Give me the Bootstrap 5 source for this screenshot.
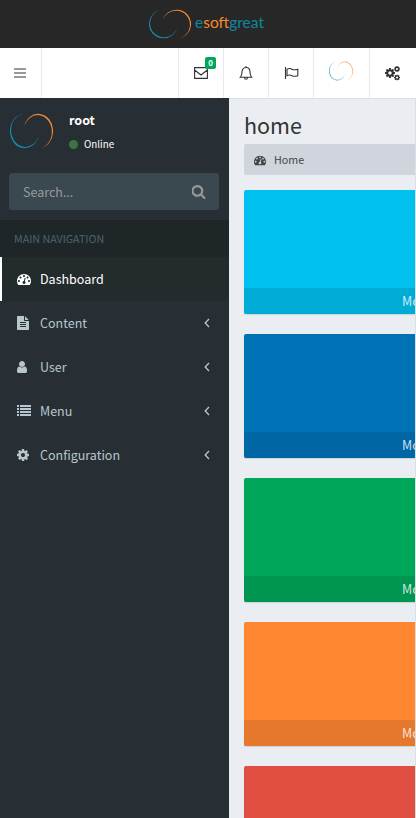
<!DOCTYPE html>
<html lang="en">
<head>
<meta charset="utf-8">
<meta name="viewport" content="width=device-width, initial-scale=1">
<title>home</title>
<link href="https://cdn.jsdelivr.net/npm/bootstrap@5.3.0/dist/css/bootstrap.min.css" rel="stylesheet">
<style>
body{font-family:"Source Sans Pro","Noto Sans CJK SC",sans-serif;font-size:12.5px;line-height:20px;width:416px;height:818px;overflow:hidden;background:#eaedf2;color:#333}
svg{display:block;flex:none}
a{text-decoration:none;color:inherit}
.brandbar{height:48px;background:#272727;padding:9px 0 0 149px}
.brandname{font-family:Lato,sans-serif;font-weight:400;font-size:16px}
.topbar{height:50px;background:#fff}
.topbar>a{border-left:1px solid #e9e9e9;height:50px}
.topbar>.toggle{width:42px;border-left:0;border-right:1px solid #e9e9e9;padding:20px 0 0 14px}
.cell{width:45px}.cell-user{width:56px;padding:13px 0 0 15px}.cell-gear{width:47px}
.count{top:9px;left:26px;width:11px;height:12px;border-radius:2px;background:#00a65a;color:#fff;font:bold 8px/12px "Noto Sans CJK SC",sans-serif;text-align:center}
.shell{height:720px}
.side{width:229px;background:#272f34;color:#b8c7ce}
.profile{height:75px;padding:15px 0 0 10px;color:#fff}
.profile b{font-weight:600;font-size:12.5px;line-height:13px;margin-bottom:10px}
.online{font-size:9.8px;line-height:16px}
.dot{width:9px;height:9px;border-radius:50%;background:#3c763d;margin-right:6px}
.find{margin:0 10px 10px 9px;height:37px;border-radius:3px;background:#3a4950;color:#999;padding:0 13px 0 14px}
.heading{height:37px;line-height:38px;padding-left:14px;font-size:10.7px;background:#1e2628;color:#4b646f}
.entry{height:44px;padding:0 19px 0 13px;border-left:3px solid transparent}
.entry.current{color:#fff;background:#232b2d;border-color:#fff;border-left-width:2px;padding-left:14px}
.ico{width:24px}
.page{border-right:1px solid #dcdfe3;border-top:1px solid #dadde1;padding:13px 0 0 15px;overflow:hidden}
.page h1{font-size:21.5px;line-height:26px;font-weight:400;margin:0 0 6px}
.crumb{height:31px;border-radius:2px 0 0 2px;background:#d0d4dc;color:#444;font-size:10.7px;padding-left:10px;margin-bottom:15px}
.tile{width:391px;height:124px;border-radius:2px;margin-bottom:20px;box-shadow:0 1px 1px rgba(0,0,0,.12)}
.tile a{height:26px;line-height:26px;background:rgba(0,0,0,.1);color:rgba(255,255,255,.8);padding-left:158px}
.aqua{background:#00c0ef}.blue{background:#0073b7}.green{background:#00a65a}.orange{background:#ff8631}.red{background:#e04e41}
</style>
</head>
<body>
<svg width="0" height="0" class="position-absolute">
<symbol id="swirl" viewBox="0 0 42 30" preserveAspectRatio="none"><path fill="#1689ab" d="M13 .6A14.400 14.400 0 1 0 28.400 18A13.900 13.900 0 1 1 13 .6z"/><path fill="#f58a34" transform="rotate(180 21 15)" d="M13 .6A14.400 14.400 0 1 0 28.400 18A13.900 13.900 0 1 1 13 .6z"/></symbol>
<symbol id="dash" viewBox="0 0 1792 1792"><path d="M384 1152q0-53-37.500-90.500t-90.500-37.500-90.500 37.500-37.500 90.500 37.500 90.500 90.500 37.500 90.500-37.500 37.500-90.500zm192-448q0-53-37.500-90.500t-90.500-37.500-90.500 37.500-37.500 90.500 37.500 90.500 90.500 37.500 90.500-37.500 37.500-90.500zm428 481l101-382q6-26-7.500-48.500t-38.500-29.500-48 6.500-30 39.500l-101 382q-60 5-107 43.500t-63 98.500q-20 77 20 146t117 89 146-20 89-117q16-60-6-117t-72-91zm660-33q0-53-37.500-90.500t-90.500-37.500-90.500 37.500-37.500 90.500 37.500 90.500 90.500 37.500 90.500-37.500 37.500-90.500zm-640-640q0-53-37.500-90.500t-90.500-37.500-90.500 37.500-37.500 90.500 37.500 90.500 90.500 37.500 90.500-37.500 37.500-90.500zm448 192q0-53-37.500-90.500t-90.500-37.500-90.500 37.500-37.500 90.500 37.500 90.500 90.500 37.500 90.500-37.500 37.500-90.500zm320 448q0 261-141 483-19 29-54 29h-1402q-35 0-54-29-141-221-141-483 0-182 71-348t191-286 286-191 348-71 348 71 286 191 191 286 71 348z"/></symbol>
<symbol id="cog" viewBox="128 128 1536 1536"><path d="M1152 896q0-106-75-181t-181-75-181 75-75 181 75 181 181 75 181-75 75-181zm512-109v222q0 12-8 23t-20 13l-185 28q-19 54-39 91 35 50 107 138 10 12 10 25t-9 23q-27 37-99 108t-94 71q-12 0-26-9l-138-108q-44 23-91 38-16 136-29 186-7 28-36 28h-222q-14 0-24.500-8.500t-11.500-21.500l-28-184q-49-16-90-37l-141 107q-10 9-25 9-14 0-25-11-126-114-165-168-7-10-7-23 0-12 8-23 15-21 51-66.500t54-70.500q-27-50-41-99l-183-27q-13-2-21-12.500t-8-23.500v-222q0-12 8-23t19-13l186-28q14-46 39-92-40-57-107-138-10-12-10-24 0-10 9-23 26-36 98.500-107.500t94.500-71.500q13 0 26 10l138 107q44-23 91-38 16-136 29-186 7-28 36-28h222q14 0 24.500 8.500t11.500 21.500l28 184q49 16 90 37l142-107q9-9 24-9 13 0 25 10 129 119 165 170 7 8 7 22 0 12-8 23-15 21-51 66.500t-54 70.500q26 50 41 98l183 28q13 2 21 12.500t8 23.500z"/></symbol>
<symbol id="left" viewBox="0 0 6 10"><path d="M5 1L1.200 5L5 9" fill="none" stroke="currentColor" stroke-width="1.300"/></symbol>
</svg>
<header>
<div class="brandbar d-flex"><svg width="42" height="30"><use href="#swirl"/></svg>
<svg width="78" height="30"><text class="brandname" x="4" y="19" textLength="69" lengthAdjust="spacingAndGlyphs" fill="#0e87a0">e<tspan fill="#f58a2c">soft</tspan>great</text></svg></div>
<nav class="topbar d-flex">
<a class="toggle me-auto" href="#"><svg width="12" height="10" fill="#999"><path d="M0 0h12v2H0zM0 4h12v2H0zM0 8h12v2H0z"/></svg></a>
<a class="cell position-relative d-flex justify-content-center align-items-center" href="#"><svg width="14" height="12" fill="none" stroke="#333" stroke-width="1.100"><path d="M.6.600h12.800v10.800H.6zM.6 3L7 8l6.400-5"/></svg><span class="count position-absolute">0</span></a>
<a class="cell d-flex justify-content-center align-items-center" href="#"><svg width="14" height="14" fill="none" stroke="#333" stroke-width="1.100"><path d="M1.200 11.300C2.800 9.800 3 8 3 6c0-2.500 1.500-4.500 4-4.500S11 3.500 11 6c0 2 .2 3.800 1.800 5.300zM7 0v1.500M5.500 11.500c0 2.300 3 2.300 3 0"/></svg></a>
<a class="cell d-flex justify-content-center align-items-center" href="#"><svg width="15" height="14" fill="none" stroke="#333" stroke-width="1.100"><path d="M1.500 1v12M3 3.200c2-1 3.500-1 5 0s3.500.7 5.800 0v6.500c-2.300.8-4.300.8-5.800 0s-3-1-5 0z"/></svg></a>
<a class="cell-user" href="#"><svg width="24" height="20" opacity=".75"><use href="#swirl"/></svg></a>
<a class="cell-gear d-flex align-items-center" href="#"><svg width="30" height="16" fill="#333"><use href="#cog" x="15" y="3" width="10" height="10"/><use href="#cog" x="24" y="1" width="6" height="6"/><use href="#cog" x="24" y="9.500" width="6" height="6"/></svg></a>
</nav>
</header>
<div class="shell d-flex">
<aside class="side flex-shrink-0">
<div class="profile d-flex"><svg width="43" height="36"><use href="#swirl"/></svg><div class="d-flex flex-column ms-3"><b>root</b><span class="online d-flex align-items-center"><i class="dot"></i>Online</span></div></div>
<div class="find d-flex align-items-center justify-content-between"><span>Search...</span><svg width="14" height="14" viewBox="128 128 1664 1664" fill="#999"><path d="M1216 832q0-185-131.500-316.500t-316.500-131.500-316.500 131.500-131.500 316.500 131.500 316.500 316.500 131.500 316.500-131.500 131.500-316.500zm512 832q0 52-38 90t-90 38q-54 0-90-38l-343-342q-179 124-399 124-143 0-273.500-55.500t-225-150-150-225-55.500-273.500 55.500-273.500 150-225 225-150 273.500-55.500 273.500 55.500 225 150 150 225 55.500 273.500q0 220-124 399l343 343q37 37 37 90z"/></svg></div>
<div class="heading">MAIN NAVIGATION</div>
<nav>
<a class="entry current d-flex align-items-center" href="#"><span class="ico"><svg width="16" height="14" fill="currentColor"><use href="#dash" x="1" width="14" height="14"/></svg></span>Dashboard</a>
<a class="entry d-flex align-items-center" href="#"><span class="ico"><svg width="14" height="14" viewBox="0 0 1792 1792" fill="currentColor"><path d="M1596 476q14 14 28 36h-472v-472q22 14 36 28zm-476 164h544v1056q0 40-28 68t-68 28h-1344q-40 0-68-28t-28-68v-1600q0-40 28-68t68-28h800v544q0 40 28 68t68 28zm160 736v-64q0-14-9-23t-23-9h-704q-14 0-23 9t-9 23v64q0 14 9 23t23 9h704q14 0 23-9t9-23zm0-256v-64q0-14-9-23t-23-9h-704q-14 0-23 9t-9 23v64q0 14 9 23t23 9h704q14 0 23-9t9-23zm0-256v-64q0-14-9-23t-23-9h-704q-14 0-23 9t-9 23v64q0 14 9 23t23 9h704q14 0 23-9t9-23z"/></svg></span><span class="me-auto">Content</span><svg width="6" height="10"><use href="#left"/></svg></a>
<a class="entry d-flex align-items-center" href="#"><span class="ico"><svg width="14" height="14" viewBox="128 0 1792 1792" fill="currentColor"><path d="M1536 1399q0 109-62.500 187t-150.500 78h-854q-88 0-150.500-78t-62.500-187q0-85 8.500-160.500t31.500-152 58.500-131 94-89 134.500-34.500q131 128 313 128t313-128q76 0 134.500 34.500t94 89 58.500 131 31.500 152 8.500 160.500zm-256-887q0 159-112.500 271.500t-271.500 112.500-271.500-112.500-112.500-271.500 112.500-271.500 271.500-112.500 271.500 112.500 112.500 271.500z"/></svg></span><span class="me-auto">User</span><svg width="6" height="10"><use href="#left"/></svg></a>
<a class="entry d-flex align-items-center" href="#"><span class="ico"><svg width="16" height="14" fill="currentColor"><path d="M1 1h2v2H1zM4 1h11v2H4zM1 4h2v2H1zM4 4h11v2H4zM1 7h2v2H1zM4 7h11v2H4zM1 10h2v2H1zM4 10h11v2H4z"/></svg></span><span class="me-auto">Menu</span><svg width="6" height="10"><use href="#left"/></svg></a>
<a class="entry d-flex align-items-center" href="#"><span class="ico"><svg width="14" height="14" fill="currentColor"><use href="#cog" x="1" y="1" width="12" height="12"/></svg></span><span class="me-auto">Configuration</span><svg width="6" height="10"><use href="#left"/></svg></a>
</nav>
</aside>
<main class="page flex-grow-1">
<h1>home</h1>
<div class="crumb d-flex align-items-center"><svg class="me-2" width="12" height="12" fill="#444"><use href="#dash"/></svg>Home</div>
<div class="tile aqua d-flex flex-column justify-content-end"><a href="#">More info</a></div>
<div class="tile blue d-flex flex-column justify-content-end"><a href="#">More info</a></div>
<div class="tile green d-flex flex-column justify-content-end"><a href="#">More info</a></div>
<div class="tile orange d-flex flex-column justify-content-end"><a href="#">More info</a></div>
<div class="tile red d-flex flex-column justify-content-end"><a href="#">More info</a></div>
</main>
</div>
<script src="https://cdn.jsdelivr.net/npm/bootstrap@5.3.0/dist/js/bootstrap.bundle.min.js"></script>
</body>
</html>
